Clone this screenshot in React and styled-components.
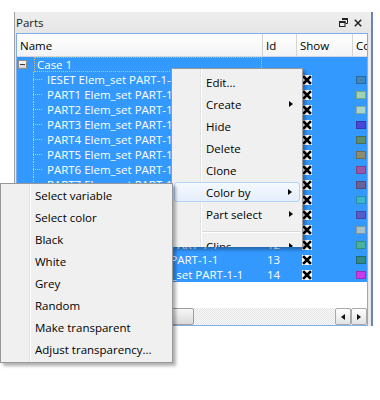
import React from "react";
import styled, { createGlobalStyle } from "styled-components";

const GlobalStyle = createGlobalStyle`
  html, body {
    margin: 0;
    padding: 0;
    background: #fff;
  }
  body {
    font-family: "Open Sans", "Noto Sans", sans-serif;
    font-size: 11.5px;
    color: #000;
  }
`;

const COLS = "246px 34px 56px 40px";
const DOT = "rgba(255,255,255,0.55)";

const Page = styled.div`
  position: relative;
  width: 380px;
  height: 400px;
  box-sizing: border-box;
  padding: 12px 0 0 14px;
  overflow: hidden;
  background: #fff;
`;

const Panel = styled.div`
  width: 359px;
  box-sizing: border-box;
  border-left: 1px solid #a0a0a0;
  border-right: 2px solid #6d83b6;
  background: #e9e9e9;
`;

const TitleBar = styled.div`
  height: 21px;
  display: flex;
  align-items: center;
  justify-content: space-between;
  padding: 0 9px 0 1px;
  background: linear-gradient(#efefef, #e5e5e5);
`;

const Title = styled.span`
  color: #1a1a1a;
`;

const TitleButtons = styled.div`
  display: flex;
  align-items: center;
  gap: 6px;
`;

const ListFrame = styled.div`
  margin: 0 3px 0 1px;
  height: 293px;
  box-sizing: border-box;
  border: 1px solid #80afe8;
  background: #fff;
  display: flex;
  flex-direction: column;
  overflow: hidden;
`;

const HeaderRow = styled.div`
  flex: none;
  display: grid;
  grid-template-columns: ${COLS};
  height: 23px;
  box-sizing: border-box;
  border-bottom: 1px solid #d5d5d5;
  background: linear-gradient(#ffffff, #f2f3f5);
`;

const HeaderCell = styled.div`
  display: flex;
  align-items: center;
  padding-left: 3px;
  border-right: 1px solid #d5d5d5;
  white-space: nowrap;
  overflow: hidden;
`;

const TreeRow = styled.div`
  flex: none;
  display: grid;
  grid-template-columns: ${COLS};
  height: 15px;
  background: #3399ff;
  color: #fff;
`;

const NameCell = styled.div`
  display: flex;
  align-items: center;
  white-space: nowrap;
  overflow: hidden;
`;

const Expander = styled.span`
  flex: none;
  width: 9px;
  height: 9px;
  margin-left: 1px;
  box-sizing: border-box;
  border: 1px solid #8c8d8d;
  background:
    linear-gradient(#3c3c3c, #3c3c3c) center / 5px 1px no-repeat,
    linear-gradient(#fcfcfc, #d3d3d3);
`;

const FocusLabel = styled.span`
  flex: 1;
  height: 15px;
  margin: 0 1px 0 7px;
  padding-left: 2px;
  box-sizing: border-box;
  border: 1px dotted #e9b878;
  display: flex;
  align-items: center;
`;

const Connector = styled.span`
  flex: none;
  width: 14px;
  height: 15px;
  margin-left: 16px;
  background:
    repeating-linear-gradient(to bottom, ${DOT} 0 1px, transparent 1px 2px) 0 0 / 1px ${(p) => (p.$last ? "8px" : "100%")} no-repeat,
    repeating-linear-gradient(to right, ${DOT} 0 1px, transparent 1px 2px) 0 7px / 9px 1px no-repeat;
`;

const IdCell = styled.div`
  display: flex;
  align-items: center;
  padding-left: 4px;
`;

const ShowCell = styled.div`
  display: flex;
  align-items: center;
  padding-left: 5px;
`;

const ColorCell = styled.div`
  display: flex;
  align-items: center;
  padding-left: 3px;
`;

const Swatch = styled.span`
  width: 10px;
  height: 8px;
  box-sizing: border-box;
  border: 1px solid rgba(0, 0, 0, 0.22);
  background: ${(p) => p.$color};
`;

const Filler = styled.div`
  flex: 1;
  background: #fff;
`;

const ScrollBar = styled.div`
  flex: none;
  height: 17px;
  display: flex;
  background:
    repeating-conic-gradient(#e4e4e4 0 25%, #fafafa 0 50%) 0 0 / 2px 2px;
`;

const Thumb = styled.div`
  width: 177px;
  box-sizing: border-box;
  border: 1px solid #9d9d9d;
  border-radius: 2px;
  background: linear-gradient(#f6f6f6, #dadada);
`;

const Track = styled.div`
  flex: 1;
`;

const ArrowButton = styled.div`
  width: 16px;
  box-sizing: border-box;
  border: 1px solid #a9a9a9;
  border-radius: 2px;
  background: linear-gradient(#fefefe, #e3e3e3);
  display: flex;
  align-items: center;
  justify-content: center;
  &::after {
    content: "";
    width: 0;
    height: 0;
    border-top: 3.5px solid transparent;
    border-bottom: 3.5px solid transparent;
    ${(p) => (p.$dir === "left" ? "border-right: 4px solid #111;" : "border-left: 4px solid #111;")}
  }
`;

const MenuBox = styled.div`
  position: absolute;
  box-sizing: border-box;
  border: 1px solid #979797;
  background:
    linear-gradient(to right, transparent 28px, #e2e3e3 28px 29px, #ffffff 29px 30px, transparent 30px),
    #f0f0f0;
  box-shadow: 3px 3px 3px rgba(0, 0, 0, 0.3);
  overflow: hidden;
`;

const MainMenu = styled(MenuBox)`
  left: 171px;
  top: 68px;
  width: 132px;
  height: 179px;
  padding-top: 2px;
  border-bottom: none;
  z-index: 1;
`;

const SubMenu = styled(MenuBox)`
  left: 0;
  top: 183px;
  width: 173px;
  height: 180px;
  z-index: 2;
`;

const MenuItem = styled.div`
  height: 22px;
  box-sizing: border-box;
  display: flex;
  align-items: center;
  padding: 0 9px 0 34px;
  white-space: nowrap;
  ${(p) =>
    p.$active &&
    `
    margin: 1px 2px;
    height: 20px;
    padding: 0 7px 0 31px;
    border: 1px solid #b4d3f8;
    border-radius: 3px;
    background: linear-gradient(#f5f9fe, #e4eefb);
  `}
`;

const MenuLabel = styled.span`
  flex: 1;
`;

const SubArrow = styled.span`
  width: 0;
  height: 0;
  border-top: 3.5px solid transparent;
  border-bottom: 3.5px solid transparent;
  border-left: 4px solid #000;
`;

const Separator = styled.div`
  margin: 6px 2px 2px 30px;
  height: 1px;
  background: #d9d9d9;
  border-bottom: 1px solid #fff;
`;

const CheckMark = () => (
  <svg width="10" height="10" viewBox="0 0 10 10">
    <rect width="10" height="10" fill="#fff" />
    <path d="M2 2 L8 8 M8 2 L2 8" stroke="#000" strokeWidth="2.6" strokeLinecap="square" />
  </svg>
);

const RestoreIcon = () => (
  <svg width="9" height="9" viewBox="0 0 9 9">
    <path d="M3 0.5 H8.5 V5.5 H6.5" fill="none" stroke="#222" strokeWidth="1" />
    <path d="M3 0 H9 V2 H3 Z" fill="#222" />
    <rect x="0.5" y="3.5" width="5.5" height="5" fill="#e9e9e9" stroke="#222" strokeWidth="1" />
    <rect x="0" y="3" width="6.5" height="2" fill="#222" />
  </svg>
);

const CloseIcon = () => (
  <svg width="8" height="8" viewBox="0 0 8 8">
    <path d="M0.8 0.8 L7.2 7.2 M7.2 0.8 L0.8 7.2" stroke="#222" strokeWidth="1.5" />
  </svg>
);

const parts = [
  { name: "IESET Elem_set PART-1-1", color: "#3f86bf" },
  { name: "PART1 Elem_set PART-1-1", color: "#9fd3b0" },
  { name: "PART2 Elem_set PART-1-1", color: "#a9d6cc" },
  { name: "PART3 Elem_set PART-1-1", color: "#4a47d6" },
  { name: "PART4 Elem_set PART-1-1", color: "#5f8e6d" },
  { name: "PART5 Elem_set PART-1-1", color: "#8d8b70" },
  { name: "PART6 Elem_set PART-1-1", color: "#9a58aa" },
  { name: "PART7 Elem_set PART-1-1", color: "#6a6199" },
  { name: "PART8 Elem_set PART-1-1", color: "#39b6cb" },
  { name: "PART9 Elem_set PART-1-1", color: "#5a5bcb" },
  { name: "PART10 Elem_set PART-1-1", color: "#a7bfc9" },
  { name: "PART11 Solid Elem_set PART-1-1", color: "#48b29c" },
  { name: "PART12 Solid Elem_set PART-1-1", color: "#2e8b8a" },
  { name: "PART13 Link Solid Elem_set PART-1-1", color: "#c63aea" },
];

const mainItems = [
  { label: "Edit..." },
  { label: "Create", sub: true },
  { label: "Hide" },
  { label: "Delete" },
  { label: "Clone" },
  { label: "Color by", sub: true, active: true },
  { label: "Part select", sub: true },
  { sep: true },
  { label: "Clips", sub: true },
];

const colorItems = [
  "Select variable",
  "Select color",
  "Black",
  "White",
  "Grey",
  "Random",
  "Make transparent",
  "Adjust transparency...",
];

export default function App() {
  return (
    <Page>
      <GlobalStyle />
      <Panel>
        <TitleBar>
          <Title>Parts</Title>
          <TitleButtons>
            <RestoreIcon />
            <CloseIcon />
          </TitleButtons>
        </TitleBar>
        <ListFrame>
          <HeaderRow>
            <HeaderCell>Name</HeaderCell>
            <HeaderCell>Id</HeaderCell>
            <HeaderCell>Show</HeaderCell>
            <HeaderCell>Color</HeaderCell>
          </HeaderRow>
          <TreeRow>
            <NameCell>
              <Expander />
              <FocusLabel>Case 1</FocusLabel>
            </NameCell>
            <IdCell />
            <ShowCell />
            <ColorCell />
          </TreeRow>
          {parts.map((p, i) => (
            <TreeRow key={p.name}>
              <NameCell>
                <Connector $last={i === parts.length - 1} />
                {p.name}
              </NameCell>
              <IdCell>{i + 1}</IdCell>
              <ShowCell>
                <CheckMark />
              </ShowCell>
              <ColorCell>
                <Swatch $color={p.color} />
              </ColorCell>
            </TreeRow>
          ))}
          <Filler />
          <ScrollBar>
            <Thumb />
            <Track />
            <ArrowButton $dir="left" />
            <ArrowButton $dir="right" />
          </ScrollBar>
        </ListFrame>
      </Panel>

      <MainMenu>
        {mainItems.map((m, i) =>
          m.sep ? (
            <Separator key={i} />
          ) : (
            <MenuItem key={m.label} $active={m.active}>
              <MenuLabel>{m.label}</MenuLabel>
              {m.sub && <SubArrow />}
            </MenuItem>
          )
        )}
      </MainMenu>

      <SubMenu>
        {colorItems.map((label) => (
          <MenuItem key={label}>
            <MenuLabel>{label}</MenuLabel>
          </MenuItem>
        ))}
      </SubMenu>
    </Page>
  );
}
